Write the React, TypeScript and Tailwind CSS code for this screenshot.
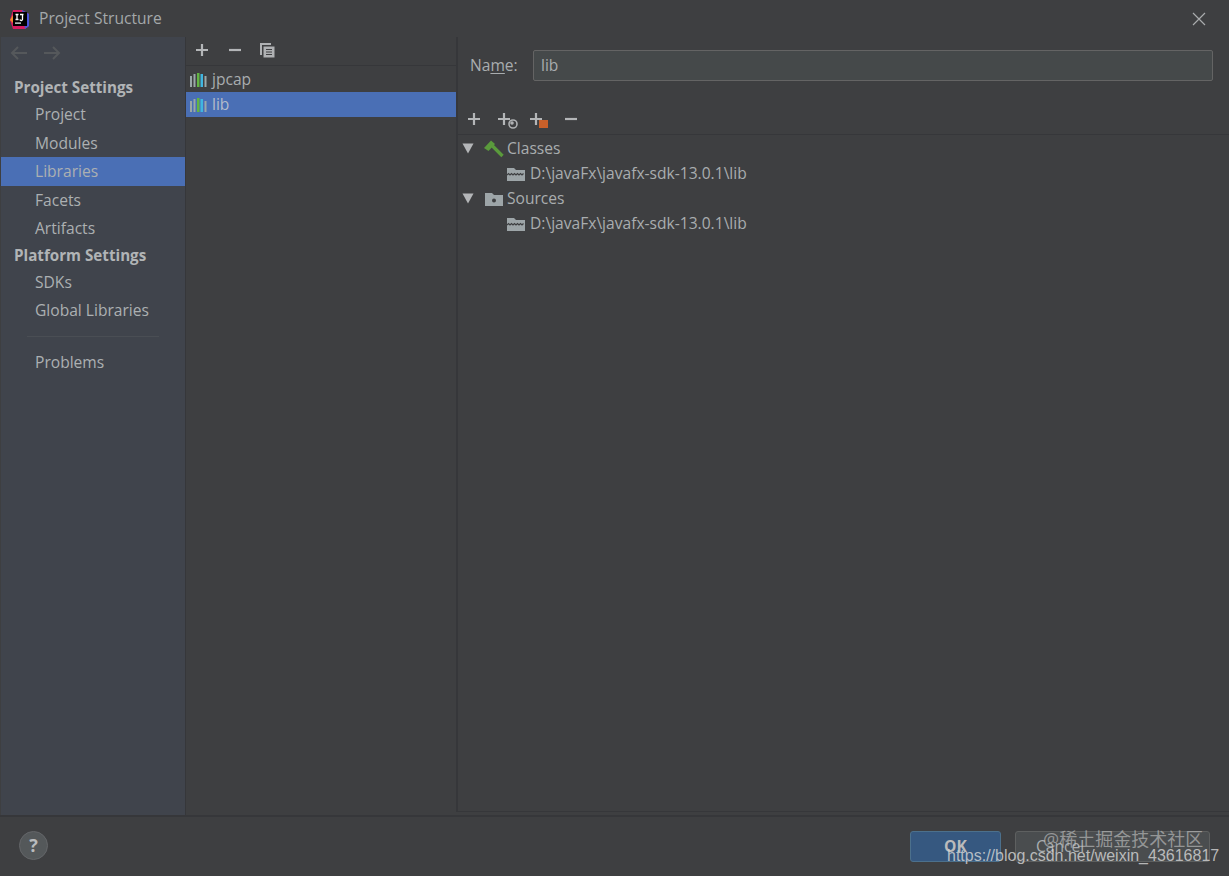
import React from 'react';

const font = { fontFamily: '"Open Sans", "Noto Sans CJK SC", sans-serif' };

function PlusIcon({ className = '' }: { className?: string }) {
  return (
    <svg width="14" height="14" viewBox="0 0 14 14" className={className}>
      <path d="M7 1v12M1 7h12" stroke="#b4b6b8" strokeWidth="2.2" />
    </svg>
  );
}

function MinusIcon() {
  return (
    <svg width="14" height="14" viewBox="0 0 14 14">
      <path d="M1 7h12" stroke="#b4b6b8" strokeWidth="2.2" />
    </svg>
  );
}

function CopyIcon() {
  return (
    <svg width="16" height="16" viewBox="0 0 16 16">
      <path d="M1 1h11v2H3v10H1z" fill="#afb1b3" />
      <path d="M4.5 4.5h11v11h-11z" fill="#afb1b3" />
      <path d="M7 7.5h6M7 10h6M7 12.5h6" stroke="#3e3f41" strokeWidth="1.2" />
    </svg>
  );
}

function LibIcon() {
  return (
    <svg width="18" height="16" viewBox="0 0 18 16">
      <rect x="0" y="4" width="2" height="11" fill="#9aa7a8" />
      <rect x="3.5" y="2" width="2" height="13" fill="#9aa7a8" />
      <rect x="7" y="1" width="2.5" height="14" fill="#62b543" />
      <rect x="10.5" y="2" width="2.5" height="13" fill="#40b6e0" />
      <rect x="14.5" y="4" width="2" height="11" fill="#9aa7a8" />
    </svg>
  );
}

function FolderZip() {
  return (
    <svg width="18" height="14" viewBox="0 0 18 14">
      <path d="M0 1h7l2 2h9v11H0z" fill="#9da5a8" />
      <path d="M0 8l1.5-1.5 1.5 1.5 1.5-1.5 1.5 1.5 1.5-1.5 1.5 1.5 1.5-1.5 1.5 1.5 1.5-1.5 1.5 1.5 1.5-1.5" fill="none" stroke="#3e3f41" strokeWidth="1.2" />
    </svg>
  );
}

function SourceFolder() {
  return (
    <svg width="18" height="14" viewBox="0 0 18 14">
      <path d="M0 1h7l2 2h9v11H0z" fill="#9da5a8" />
      <circle cx="9" cy="8.5" r="2" fill="#3e3f41" />
    </svg>
  );
}

function Hammer() {
  return (
    <svg width="20" height="18" viewBox="0 0 20 18">
      <path d="M7.5 5l11 11" stroke="#5a9a3c" strokeWidth="3.4" />
      <path d="M0 8L7 0.5l4 3.5-6.5 7z" fill="#5a9a3c" />
    </svg>
  );
}

function Triangle() {
  return (
    <svg width="12" height="11" viewBox="0 0 12 11">
      <path d="M0.5 0.5h11L6 10.5z" fill="#b4b6b8" />
    </svg>
  );
}

function NavItem({ label, active }: { label: string; active?: boolean }) {
  return (
    <div className={`h-[28.5px] pl-[34px] pt-[1px] flex items-center text-[15.6px] text-[#acb0b2] ${active ? 'bg-[#4a6fb5]' : ''}`}>
      {label}
    </div>
  );
}

function NavHeader({ label }: { label: string }) {
  return <div className="h-[25px] pl-[13px] flex items-center text-[15.2px] font-bold text-[#b1b4b6]">{label}</div>;
}

function TreeRow({ indent, children }: { indent: string; children: React.ReactNode }) {
  return <div className={`h-[25px] flex items-center text-[15.6px] text-[#a9adaf] ${indent}`}>{children}</div>;
}

export default function App() {
  return (
    <div style={font} className="w-[1229px] h-[876px] bg-[#3e3f41] flex flex-col overflow-hidden relative">
      {/* Title bar */}
      <div className="h-[37px] shrink-0 flex items-center pl-[10px] pr-[23px]">
        <svg width="20" height="20" viewBox="0 0 20 20" className="mr-[9px]">
          <path d="M3 1h9l7 4v12l-4 3H3L0 11z" fill="#d81b60" />
          <path d="M12 1l7 4v12l-4 3z" fill="#4a55d8" />
          <path d="M0 11l3-5v8z" fill="#f28c28" />
          <rect x="3" y="3" width="14" height="14" fill="#000" />
          <rect x="5" y="13.5" width="6" height="1.2" fill="#fff" />
          <path d="M5.5 5.5h3M7 5.5v5M5.5 10.5h3M10 5.5h3.5M12.5 5.5v4.5a1 1 0 0 1-2.5 .5" fill="none" stroke="#fff" strokeWidth="1.3" />
        </svg>
        <span className="text-[15.6px] text-[#a4a8aa]">Project Structure</span>
        <svg width="14" height="14" viewBox="0 0 14 14" className="ml-auto">
          <path d="M1 1l12 12M13 1L1 13" stroke="#a9abad" strokeWidth="1.2" />
        </svg>
      </div>

      {/* Body */}
      <div className="flex-1 min-h-0 flex">
        {/* Sidebar */}
        <div className="w-[185px] ml-px shrink-0 bg-[#40444c] border-r border-[#36373a] flex flex-col">
          <div className="h-[32px] flex items-center pl-[9px] gap-[15px] shrink-0">
            <svg width="18" height="14" viewBox="0 0 18 14">
              <path d="M17 7H2M8 1L2 7l6 6" fill="none" stroke="#55585b" strokeWidth="2" />
            </svg>
            <svg width="18" height="14" viewBox="0 0 18 14">
              <path d="M1 7h15M10 1l6 6-6 6" fill="none" stroke="#55585b" strokeWidth="2" />
            </svg>
          </div>
          <div className="pt-[6px]">
            <NavHeader label="Project Settings" />
            <NavItem label="Project" />
            <NavItem label="Modules" />
            <NavItem label="Libraries" active />
            <NavItem label="Facets" />
            <NavItem label="Artifacts" />
            <NavHeader label="Platform Settings" />
            <NavItem label="SDKs" />
            <NavItem label="Global Libraries" />
            <div className="h-px bg-[#4a4e54] mx-[26px] mt-[11px] mb-[11px]" />
            <NavItem label="Problems" />
          </div>
        </div>

        {/* Library list */}
        <div className="w-[270px] shrink-0 flex flex-col">
          <div className="h-[29px] shrink-0 border-b border-[#36373a] flex items-center pl-[9px] pb-[3px] gap-[19px]">
            <PlusIcon />
            <MinusIcon />
            <div className="-ml-[2px]">
              <CopyIcon />
            </div>
          </div>
          <div className="h-[26px] flex items-center pl-[4px] pt-[1px] gap-[4px] text-[15.6px] text-[#a9adaf]">
            <LibIcon />
            <span>jpcap</span>
          </div>
          <div className="h-[25px] flex items-center pl-[4px] gap-[4px] text-[15.6px] text-[#b4bccb] bg-[#4a6fb5]">
            <LibIcon />
            <span>lib</span>
          </div>
        </div>

        {/* Detail */}
        <div className="flex-1 min-w-0 mb-[3px] border-l-2 border-b border-[#36373a] flex flex-col">
          <div className="h-[58px] shrink-0 flex items-center pl-[12px] pr-[16px] pb-[1px]">
            <span className="text-[15.6px] text-[#a9adaf] w-[63px] shrink-0">
              Na<span className="underline underline-offset-2">m</span>e:
            </span>
            <div className="flex-1 h-[31px] bg-[#45494a] border border-[#646464] rounded-[2px] flex items-center pl-[7px] text-[15.6px] text-[#a9adaf]">
              lib
            </div>
          </div>
          <div className="h-[40px] shrink-0 border-b border-[#36373a] flex items-end pb-[8px] pl-[9px]">
            <PlusIcon />
            <div className="relative ml-[16px] w-[20px] h-[14px]">
              <PlusIcon />
              <svg width="10" height="10" viewBox="0 0 10 10" className="absolute left-[11px] top-[7px]">
                <circle cx="5" cy="5" r="4" fill="none" stroke="#afb1b3" strokeWidth="1.6" />
                <circle cx="4" cy="4" r="1.8" fill="#afb1b3" />
              </svg>
            </div>
            <div className="relative ml-[12px] w-[20px] h-[14px]">
              <PlusIcon />
              <div className="absolute left-[10px] top-[8px] w-[9px] h-[8px] bg-[#c8602a]" />
            </div>
            <div className="ml-[15px]">
              <MinusIcon />
            </div>
          </div>
          <div className="pt-[1px]">
            <TreeRow indent="pl-[4px]">
              <Triangle />
              <span className="ml-[10px] mr-[3px]"><Hammer /></span>
              <span>Classes</span>
            </TreeRow>
            <TreeRow indent="pl-[49px]">
              <FolderZip />
              <span className="ml-[5px]">D:\javaFx\javafx-sdk-13.0.1\lib</span>
            </TreeRow>
            <TreeRow indent="pl-[4px]">
              <Triangle />
              <span className="ml-[11px] mr-[4px]"><SourceFolder /></span>
              <span>Sources</span>
            </TreeRow>
            <TreeRow indent="pl-[49px]">
              <FolderZip />
              <span className="ml-[5px]">D:\javaFx\javafx-sdk-13.0.1\lib</span>
            </TreeRow>
          </div>
        </div>
      </div>

      {/* Footer */}
      <div className="h-[61px] shrink-0 border-t-2 border-[#36373a] flex items-center pl-[19px] pr-[19px] pb-[2px]">
        <div className="w-[29px] h-[29px] rounded-full bg-[#54585a] border border-[#646669] flex items-center justify-center text-[18px] font-bold text-[#b9bbbd]">
          ?
        </div>
        <div className="ml-auto mt-[2px] w-[91px] h-[31px] rounded-[3px] bg-[#365880] border border-[#4c708c] flex items-center justify-center text-[15.6px] font-bold text-[#bbbbbb]">
          OK
        </div>
        <div className="ml-[14px] mt-[2px] w-[195px] h-[31px] rounded-[3px] bg-[#4a4d4f] border border-[#5e6060] flex items-center pl-[20px] text-[15.6px] text-[#a9adaf]">
          Cancel
        </div>
      </div>

      {/* Watermark */}
      <div className="absolute left-[1043px] top-[828px] text-[18px] leading-[22px] text-[#c8c8c8]/60 whitespace-nowrap">
        @稀土掘金技术社区
      </div>
      <div style={{ fontFamily: '"Liberation Sans", sans-serif' }} className="absolute left-[947px] top-[846px] text-[16px] leading-[20px] text-[#d8d8d8]/80 whitespace-nowrap">
        https://blog.csdn.net/weixin_43616817
      </div>
    </div>
  );
}
